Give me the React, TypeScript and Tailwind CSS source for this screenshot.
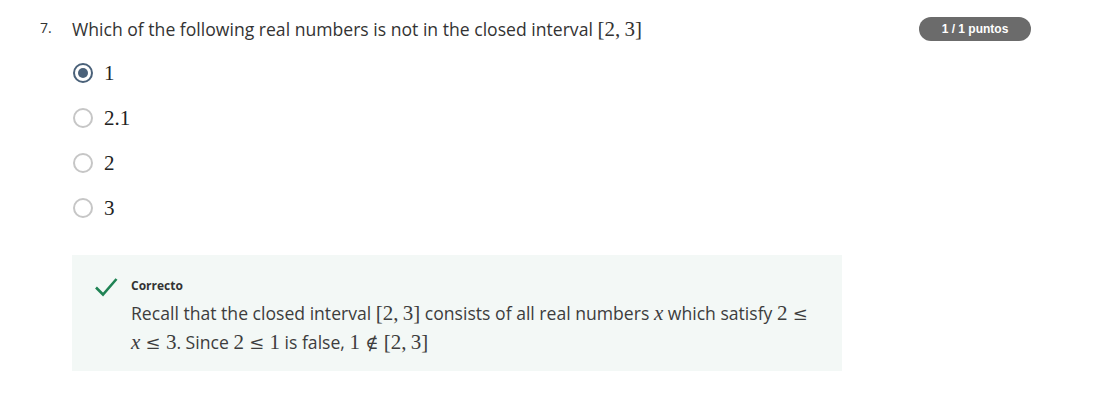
import { useState } from "react"

const options = ["1", "2.1", "2", "3"]

function M({ children }: { children: React.ReactNode }) {
  return <span className="font-['Liberation_Serif',serif] text-[21px]">{children}</span>
}

// relation symbols look closer to the KaTeX ones in DejaVu
function R({ children }: { children: React.ReactNode }) {
  return <span className="font-['DejaVu_Serif',serif] text-[18px]">{children}</span>
}

export default function App() {
  const [picked, setPicked] = useState(0)

  return (
    <div className="w-[1101px] h-[412px] bg-white font-['Open_Sans',sans-serif] text-[#333]">
      <div className="flex items-start pt-[14px]">
        <div className="w-[72px] pl-[40px] pt-[3px] text-[14px]">7.</div>
        <div className="flex-1">
          <div className="flex items-start">
            <p className="flex-1 text-[17.6px] leading-[30px]">
              Which of the following real numbers is not in the closed interval <M>[2,&thinsp;3]</M>
            </p>
            <span className="mt-[3px] mr-[70px] h-6 w-[112px] rounded-full bg-[#6b6b6b] text-white text-[12px] font-bold font-['Liberation_Sans',sans-serif] flex items-center justify-center">
              1 / 1 puntos
            </span>
          </div>

          <div className="mt-[19px] flex flex-col gap-[25px]">
            {options.map((o, i) => (
              <label key={o} className="flex items-center gap-[11px] cursor-pointer" onClick={() => setPicked(i)}>
                <span
                  className={
                    "ml-[1px] h-5 w-5 rounded-full border-2 flex items-center justify-center " +
                    (picked === i ? "border-[#4a6179]" : "border-[#c6c6c6]")
                  }
                >
                  {picked === i && <span className="h-[10px] w-[10px] rounded-full bg-[#4a6179]" />}
                </span>
                <span className="font-['Liberation_Serif',serif] text-[21px] leading-[20px] text-[#222]">{o}</span>
              </label>
            ))}
          </div>

          <div className="mt-[37px] w-[770px] bg-[#f3f8f6] pl-[22px] pr-[22px] pt-[20px] pb-[14px] flex gap-[13px]">
            <svg width="24" height="22" viewBox="0 0 24 22" className="shrink-0 mt-[1px]">
              <path d="M2 11.5 L9 18.5 L22.5 3" fill="none" stroke="#1f8354" strokeWidth="2.6" />
            </svg>
            <div>
              <div className="text-[12px] font-bold text-[#333] leading-[20px] mt-[1px]">Correcto</div>
              <p className="mt-[3px] text-[17.6px] leading-[28px] text-[#3d3d3d]">
                Recall that the closed interval <M>[2,&thinsp;3]</M> consists of all real numbers <M><i>x</i></M> which satisfy{" "}
                <M>2&nbsp;<R>≤</R></M> <M><i>x</i>&nbsp;<R>≤</R>&nbsp;3</M>. Since <M>2&nbsp;<R>≤</R>&nbsp;1</M> is false,{" "}
                <M>1&nbsp;<R>∉</R>&nbsp;[2,&thinsp;3]</M>
              </p>
            </div>
          </div>
        </div>
      </div>
    </div>
  )
}
